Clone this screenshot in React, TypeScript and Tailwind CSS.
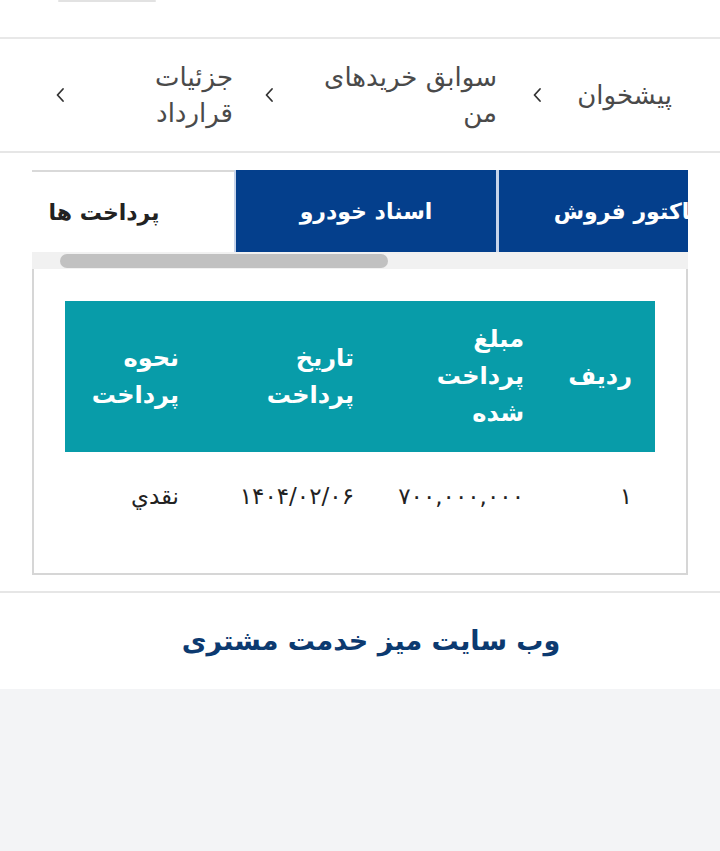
import React from "react";

const font = { fontFamily: '"DejaVu Sans", "Noto Sans", sans-serif' };

function Chevron() {
  return (
    <svg width="10" height="16" viewBox="0 0 10 16" className="shrink-0">
      <path d="M8 2 L2.5 8 L8 14" fill="none" stroke="#333" strokeWidth="1.8" strokeLinecap="round" strokeLinejoin="round" />
    </svg>
  );
}

export default function App() {
  return (
    <div dir="rtl" className="w-[720px] min-h-[851px] bg-[#f3f4f6]" style={font}>
      <div className="bg-white">
        {/* top bar */}
        <div className="h-[37px] flex justify-end">
          <div className="w-[98px] h-[2px] rounded-full bg-[#e2e2e2] me-[58px]" />
        </div>
        <div className="h-[2px] bg-[#e8e8e8]" />

        {/* breadcrumb */}
        <div className="h-[112px] flex items-center ps-[48px] text-[#4a4a4a] text-[26px] leading-[36px]">
          <div className="flex items-center">
            <span className="w-[102px] text-right whitespace-nowrap">پیشخوان</span>
            <span className="ms-[28px] me-[35px]"><Chevron /></span>
            <span className="w-[190px] text-right whitespace-nowrap">سوابق خریدهای<br />من</span>
            <span className="ms-[33px] me-[31px]"><Chevron /></span>
            <span className="w-[135px] text-right whitespace-nowrap">جزئیات<br />قرارداد</span>
            <span className="ms-[33px]"><Chevron /></span>
          </div>
        </div>
        <div className="h-[2px] bg-[#e6e6e6]" />

        {/* tabs + card */}
        <div className="pt-[17px] px-[32px] pb-[16px]">
          <div className="overflow-hidden h-[82px]">
            <div className="flex h-[82px] ms-[-71px] w-max">
              <div className="w-[260px] h-[82px] bg-[#043f8c] text-white flex items-center justify-center text-[22px] font-bold border-t border-[#043f8c]">
                فاکتور فروش
              </div>
              <div className="w-[3px] bg-[#c7d4ea]" />
              <div className="w-[260px] h-[82px] bg-[#043f8c] text-white flex items-center justify-center text-[22px] font-bold border-t border-[#043f8c]">
                اسناد خودرو
              </div>
              <div className="w-[2px] bg-[#c7d4ea]" />
              <div className="w-[260px] h-[82px] bg-white text-[#222] flex items-center justify-center text-[22px] font-bold border-t-2 border-[#d9d9d9]">
                پرداخت ها
              </div>
            </div>
          </div>
          {/* scrollbar */}
          <div dir="ltr" className="h-[17px] bg-[#f1f1f1] flex items-center ps-[28px]">
            <div className="w-[328px] h-[14px] rounded-full bg-[#c1c1c1]" />
          </div>
          {/* card */}
          <div className="border-2 border-t-0 border-[#d6d6d6] px-[31px] pt-[32px] pb-[32px] bg-white">
            <table className="w-full border-collapse">
              <thead>
                <tr className="bg-[#089ca9] text-white text-[24px] font-bold leading-[37px]">
                  <th className="w-[108px] text-right align-middle pr-[23px] py-[20px]">ردیف</th>
                  <th className="w-[170px] text-right align-middle pr-[23px] py-[20px]">مبلغ<br />پرداخت<br />شده</th>
                  <th className="w-[175px] text-right align-middle pr-[23px] py-[20px]">تاریخ<br />پرداخت</th>
                  <th className="text-right align-middle pr-[23px] py-[20px]">نحوه<br />پرداخت</th>
                </tr>
              </thead>
              <tbody>
                <tr className="text-[#222] text-[23px] h-[89px]">
                  <td className="text-right pr-[23px] align-middle">۱</td>
                  <td className="text-right pr-[23px] align-middle">۷۰۰,۰۰۰,۰۰۰</td>
                  <td className="text-right pr-[23px] align-middle">۱۴۰۴/۰۲/۰۶</td>
                  <td className="text-right pr-[23px] align-middle">نقدي</td>
                </tr>
              </tbody>
            </table>
          </div>
        </div>
        <div className="h-[2px] bg-[#e6e6e6]" />

        {/* footer */}
        <div className="h-[96px] flex items-center justify-center pl-[22px]">
          <span className="text-[#0c3a70] text-[27px] font-bold">وب سایت میز خدمت مشتری</span>
        </div>
      </div>
    </div>
  );
}
